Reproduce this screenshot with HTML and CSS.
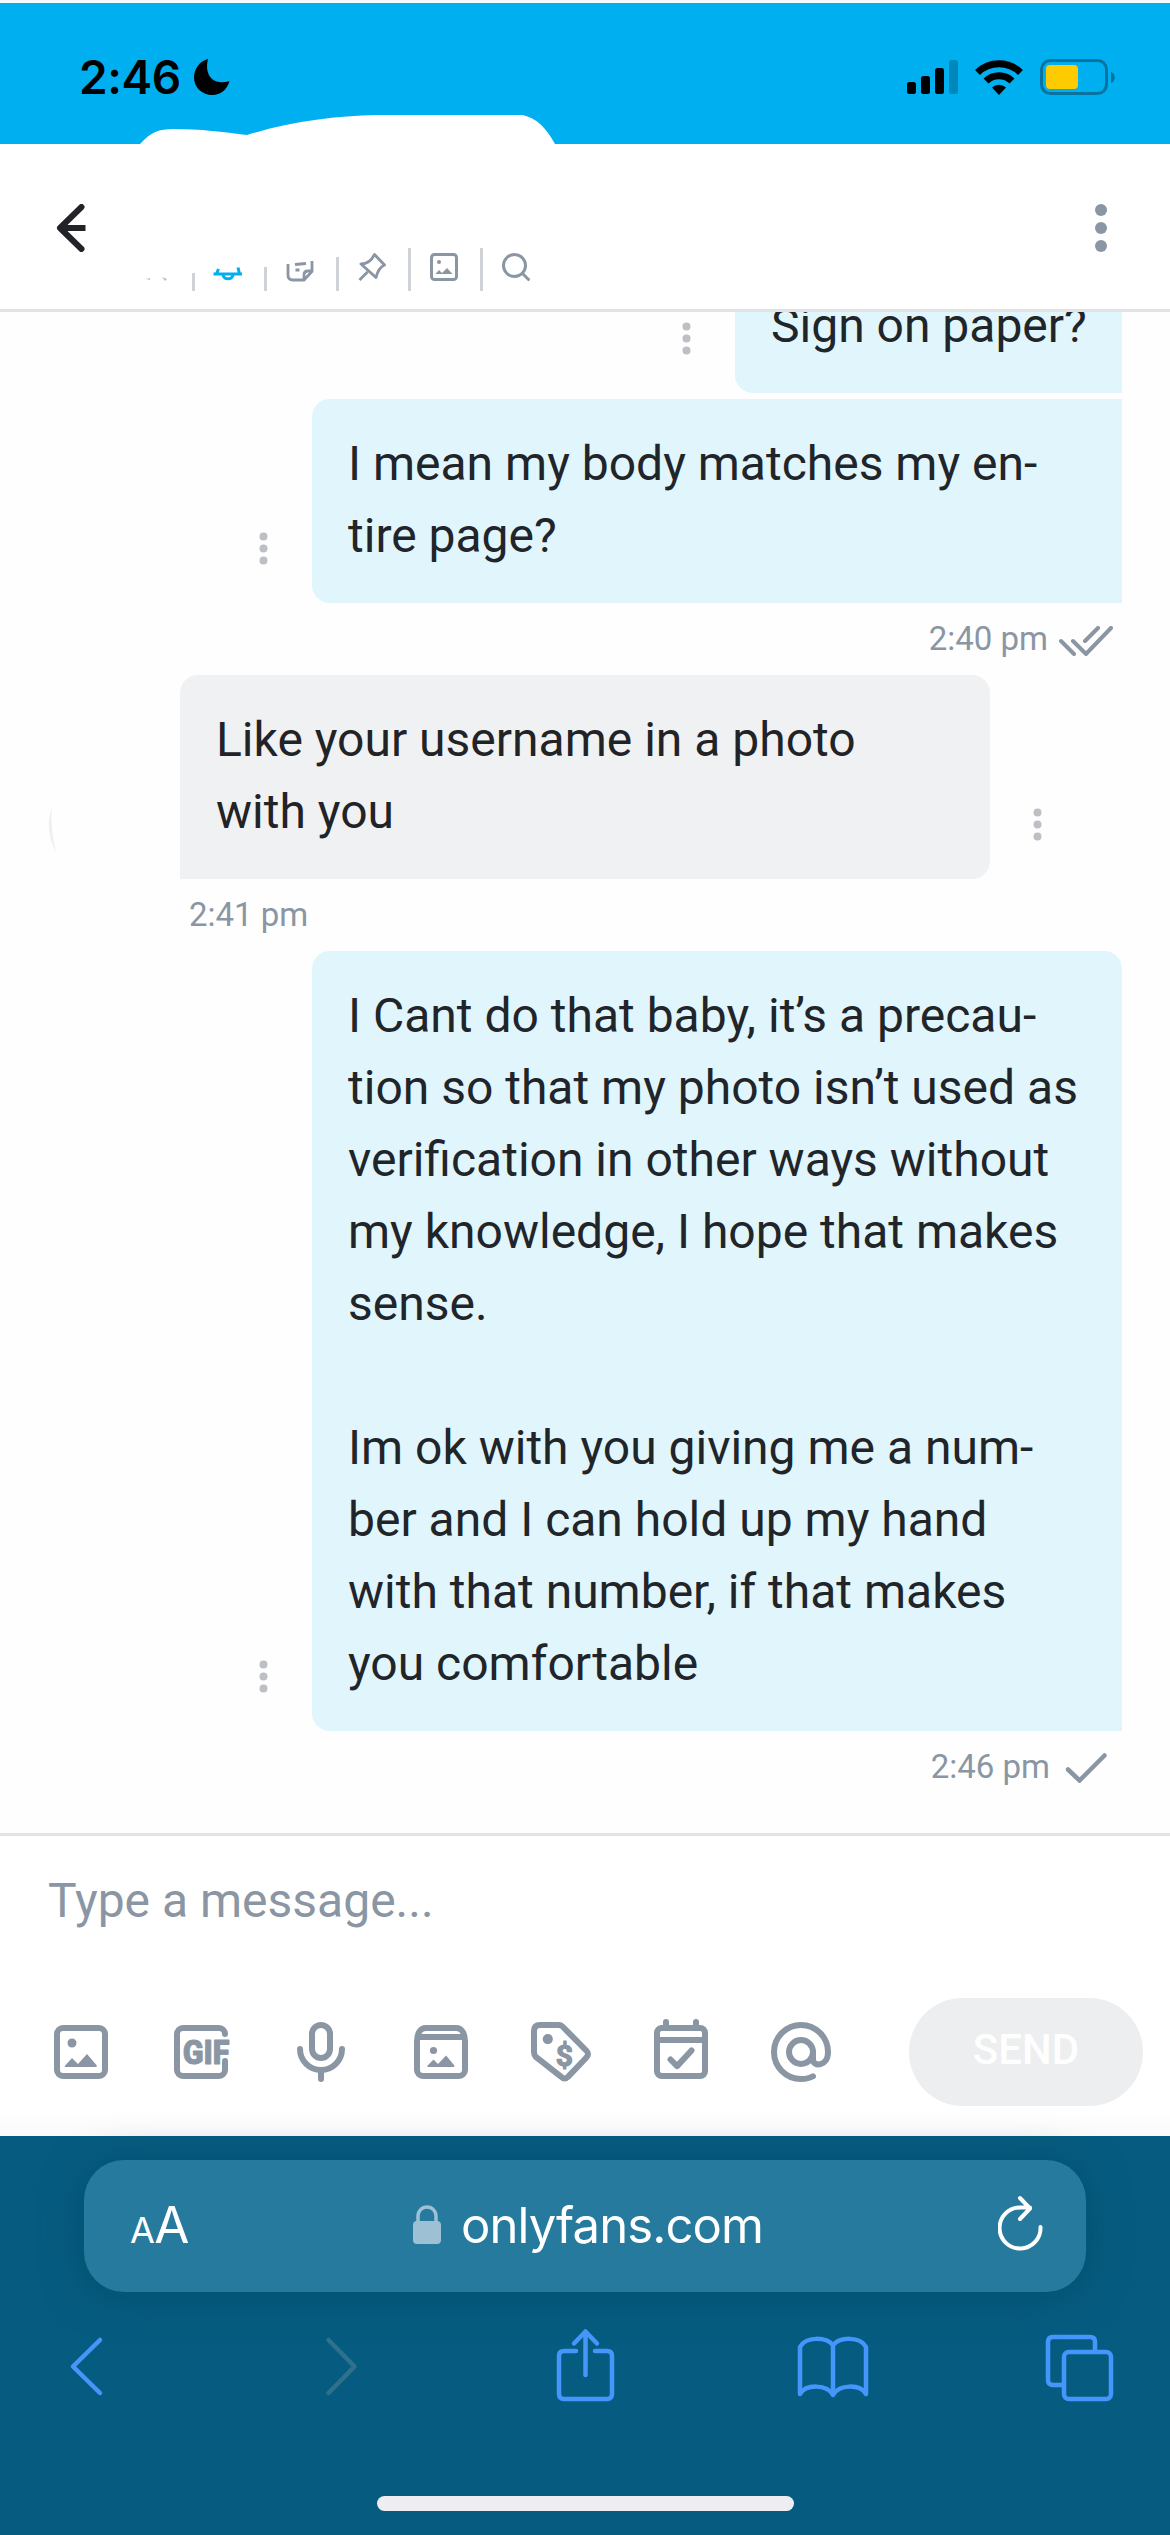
FILE: index.html
```html
<!DOCTYPE html>
<html lang="en">
<head>
<meta charset="utf-8">
<title>Messages</title>
<link rel="stylesheet" href="styles.css">
</head>
<body>
<div class="screen">
  <div class="status">
    <span class="clock">2:46</span>
    <svg class="moon" width="36" height="36" viewBox="0 0 36 36"><path d="M14 0C12 8 13 15 18 20c5 4 11 4 17.500 2C33 31 26 36 18.500 36 8 36 0 28.500 0 18.500 0 9.500 6 2 14 0z" fill="#000"/></svg>
    <div class="indicators">
      <svg width="52" height="36" viewBox="0 0 52 36"><rect x="0" y="23" width="9" height="12" rx="2.500"/><rect x="14" y="17" width="9" height="18" rx="2.500"/><rect x="28" y="9" width="9" height="26" rx="2.500"/><rect x="42" y="1" width="9" height="34" rx="2.500" opacity=".22"/></svg>
      <svg class="wifi" width="48" height="36" viewBox="0 0 48 36"><path d="M2.500 13.500a31 31 0 0 1 43 0M11 22a18.500 18.500 0 0 1 26 0" fill="none" stroke="#000" stroke-width="7"/><path d="M24 36l-7-7.500a10 10 0 0 1 14 0z"/></svg>
      <svg class="battery" width="76" height="36" viewBox="0 0 76 36"><rect x="1.500" y="1.500" width="65" height="33" rx="9" fill="none" stroke="#0873a0" stroke-width="3"/><rect x="6" y="6" width="32" height="24" rx="4" fill="#fecb00"/><path d="M71 13c5 1.500 5 9.500 0 11z" fill="#0873a0"/></svg>
    </div>
    <svg class="cover" width="415" height="29" viewBox="0 0 415 29"><path d="M0 29C11 17 19 14 33 14c28 0 50 3 74 6 45-14 88-19 130-20 45-1 90-1 138-1 18 1 29 10 40 30z" fill="#fff"/></svg>
  </div>

  <header class="header">
    <svg class="back" width="30" height="48" viewBox="0 0 30 48"><path d="M4 24h25.500" fill="none" stroke="#212328" stroke-width="6"/><path d="M25.500 3L4 24l21.500 21" fill="none" stroke="#212328" stroke-width="6" stroke-linecap="round" stroke-linejoin="round"/></svg>
    <div class="tools">
      <span class="tool"><svg width="30" height="30" viewBox="0 0 30 30"><path d="M5 27l4-1v2zM21 25l5 2-2 2z" fill="#8a96a3" opacity=".6"/></svg></span>
      <span class="tool"><i class="sep sep-1"></i><svg width="30" height="30" viewBox="0 0 30 30"><path d="M5.500 17L3.500 22h23L25 15.500M10 23c1 5 9 5 10 0M0.500 22H29" fill="none" stroke="#00aff0" stroke-width="3"/></svg></span>
      <span class="tool"><i class="sep sep-2"></i><svg width="30" height="30" viewBox="0 0 30 30"><path d="M3 12v11q0 5 5 5h11l8-8.500V9M19 28v-5q0-4 4-4h4M10 12.500l11-1M10.500 18h4" fill="none" stroke="#8a96a3" stroke-width="2.800"/></svg></span>
      <span class="tool"><i class="sep sep-3"></i><svg width="30" height="30" viewBox="0 0 30 30"><path d="M17.500 2.500L27.500 13q-6 2.500-8.500 12.500L4 12q9 0 13.500-9.500zM10.500 20L2.500 28" fill="none" stroke="#8a96a3" stroke-width="2.900" stroke-linejoin="round"/></svg></span>
      <span class="tool"><i class="sep"></i><svg width="30" height="30" viewBox="0 0 30 30"><rect x="2.500" y="2.500" width="25" height="25" rx="3" fill="none" stroke="#8a96a3" stroke-width="3"/><circle cx="10" cy="10" r="2" fill="#8a96a3"/><path d="M6.500 22l3.500-4 3 3 5-5 5.500 6z" fill="#8a96a3"/></svg></span>
      <span class="tool"><i class="sep"></i><svg width="30" height="30" viewBox="0 0 30 30"><circle cx="13.500" cy="13.500" r="11" fill="none" stroke="#8a96a3" stroke-width="3"/><path d="M21.500 21.500l6 6" stroke="#8a96a3" stroke-width="3" stroke-linecap="round"/></svg></span>
    </div>
    <svg class="menu" width="12" height="48" viewBox="0 0 12 48" fill="#8a96a3"><circle cx="6" cy="6" r="6"/><circle cx="6" cy="24" r="6"/><circle cx="6" cy="42" r="6"/></svg>
  </header>

  <main class="chat">
    <div class="row row-cut">
      <svg class="dots" width="9" height="33" viewBox="0 0 9 33"><circle cx="4.500" cy="4.500" r="4"/><circle cx="4.500" cy="16.500" r="4"/><circle cx="4.500" cy="28.500" r="4"/></svg>
      <p class="bubble mine short">Sign on paper?</p>
    </div>
    <div class="row">
      <svg class="dots" width="9" height="33" viewBox="0 0 9 33"><circle cx="4.500" cy="4.500" r="4"/><circle cx="4.500" cy="16.500" r="4"/><circle cx="4.500" cy="28.500" r="4"/></svg>
      <p class="bubble mine">I mean my body matches my en-<br>tire page?</p>
    </div>
    <div class="stamp">2:40 pm <svg class="double" width="54" height="30" viewBox="0 0 54 30"><path d="M2 15l13 13M14 15l13 13L52 2M26 15L39 2" fill="none" stroke="#8a96a3" stroke-width="4" stroke-linecap="round"/></svg></div>
    <div class="row theirs-row">
      <svg class="arc" width="8" height="46" viewBox="0 0 8 46"><path d="M4 0Q-4 22 8 45Q2 22 4 0z" fill="#efeff0"/></svg>
      <p class="bubble theirs">Like your username in a photo<br>with you</p>
      <svg class="dots" width="9" height="33" viewBox="0 0 9 33"><circle cx="4.500" cy="4.500" r="4"/><circle cx="4.500" cy="16.500" r="4"/><circle cx="4.500" cy="28.500" r="4"/></svg>
    </div>
    <div class="stamp stamp-left">2:41 pm</div>
    <div class="row">
      <svg class="dots" width="9" height="33" viewBox="0 0 9 33"><circle cx="4.500" cy="4.500" r="4"/><circle cx="4.500" cy="16.500" r="4"/><circle cx="4.500" cy="28.500" r="4"/></svg>
      <p class="bubble mine first">I Cant do that baby, it’s a precau-<br>tion so that my photo isn’t used as<br>verification in other ways without<br>my knowledge, I hope that makes<br>sense.<br><br>Im ok with you giving me a num-<br>ber and I can hold up my hand<br>with that number, if that makes<br>you comfortable</p>
    </div>
    <div class="stamp">2:46 pm <svg class="single" width="42" height="30" viewBox="0 0 42 30"><path d="M3 16.500L14.500 27.500 39.500 2.500" fill="none" stroke="#8a96a3" stroke-width="4.500" stroke-linecap="round"/></svg></div>
  </main>

  <section class="composer">
    <div class="placeholder">Type a message...</div>
    <div class="actions">
      <svg class="act" viewBox="0 0 24 24"><rect x="4" y="4" width="16" height="16" rx="2"/><circle class="f" cx="9" cy="9" r="1.500"/><path class="f" d="M6.800 17q-.500 0 0-.600L9 14l2 2 3-3.300 3.200 3.700q.300.600-.200.600z"/></svg>
      <svg class="act" viewBox="0 0 24 24"><path d="M20 6V6a2 2 0 0 0-2-2H6a2 2 0 0 0-2 2v12a2 2 0 0 0 2 2h12a2 2 0 0 0 2-2v-3"/><text class="gif" x="5.900" y="16" textLength="15.600" lengthAdjust="spacingAndGlyphs">GIF</text></svg>
      <svg class="act" viewBox="0 0 24 24"><rect x="9" y="3" width="6" height="11" rx="3"/><path d="M5 11a7 7 0 0 0 14 0M12 18v3"/></svg>
      <svg class="act" viewBox="0 0 24 24"><path d="M4 8.500C4 6 5 4 7 4h10c2 0 3 2 3 4.500V18a2 2 0 0 1-2 2H6a2 2 0 0 1-2-2zM4.500 7h15"/><circle class="f" cx="9.500" cy="11.500" r="1.200"/><path class="f" d="M7.800 17q-.600 0-.200-.600L9.500 14.500l1.500 1.500 2.700-2.800 2.700 3.200q.300.600-.200.600z"/></svg>
      <svg class="act" viewBox="0 0 24 24"><path d="M5 3h6.200q.8 0 1.300.5l7.900 8q1.200 1.200 0 2.400l-6 6.300q-1.200 1.200-2.400 0L3.600 13.600Q3 13 3 12V5q0-2 2-2z"/><circle class="f" cx="7.600" cy="7.700" r="1.700"/><text class="dollar" x="13.100" y="16.500">$</text></svg>
      <svg class="act" viewBox="0 0 24 24"><rect x="4" y="4" width="16" height="16" rx="1.600"/><path d="M4 8h16M7 2v2M17 2v2M8.500 14.500l2.200 2.200 4.800-5.200"/></svg>
      <svg class="act" viewBox="0 0 24 24"><circle cx="12" cy="12" r="4"/><path d="M16 12v2.500c0 2.500 5 2.500 5-2.500a9 9 0 1 0-9 9q2.500 0 4-.9"/></svg>
      <span class="send">SEND</span>
    </div>
  </section>

  <footer class="browser">
    <div class="address">
      <span class="aa"><span class="small">A</span>A</span>
      <span class="site">
        <svg class="lock" width="28" height="39" viewBox="0 0 28 39"><rect x="0" y="16" width="28" height="23" rx="4" fill="#9dc0d4"/><path d="M5 17v-6a9 9 0 0 1 18 0v6" fill="none" stroke="#9dc0d4" stroke-width="3.500"/></svg>
        onlyfans.com
      </span>
      <svg class="reload" width="46" height="56" viewBox="0 0 46 56"><path d="M42.500 32A20.500 20.500 0 1 1 22 12.500H32M22 3l10 10.500L22 24" fill="none" stroke="#fff" stroke-width="4" stroke-linecap="round" stroke-linejoin="round"/></svg>
    </div>
    <nav class="nav">
      <svg width="72" height="76" viewBox="0 0 72 76"><path d="M31 12L4 38.500 31 65"/></svg>
      <svg class="fwd" width="72" height="76" viewBox="7 0 72 76"><path d="M22.500 12L48.500 38.500 22.500 65"/></svg>
      <svg width="72" height="76" viewBox="7 0 72 76"><path d="M27 23H15q-5 0-5 5v38q0 5 5 5h43q5 0 5-5V28q0-5-5-5H46M36.500 47V4M25 15.500L36.500 3.500 48 15.500"/></svg>
      <svg width="72" height="76" viewBox="3 0 72 76"><path d="M36 17C29 9 9 8 3 19v47c6-10 27-10 33 1 6-11 27-11 33-1V19C63 8 43 9 36 17v49"/></svg>
      <svg width="72" height="76" viewBox="0 0 72 76"><rect x="21" y="24" width="47" height="47" rx="5"/><path d="M20 57h-10q-5 0-5-5V14q0-5 5-5h37q5 0 5 5v9"/></svg>
    </nav>
    <div class="home"></div>
  </footer>
</div>
</body>
</html>
```
FILE: styles.css
```css
* { box-sizing: border-box; }
body { margin: 0; background: #fff; font-family: Roboto, "Liberation Sans", sans-serif; }
svg { display: block; flex: none; }
p { margin: 0; }

.screen { width: 1170px; height: 2535px; display: flex; flex-direction: column; overflow: hidden; background: #fefefe; }

.status { position: relative; height: 144px; padding: 7px 54px 0 79px; border-top: 3px solid #f4fbfd; background: #00aff0; display: flex; align-items: center; }
.clock { width: 115px; font: 600 46px/56px Inter, sans-serif; letter-spacing: -.4px; color: #000; white-space: nowrap; }
.indicators { margin-left: auto; display: flex; align-items: center; }
.wifi { margin-left: 16px; }
.battery { margin-left: 17px; }
.cover { position: absolute; left: 140px; bottom: 0; }

.header { height: 168px; padding: 0 63px 0 56px; border-bottom: 3px solid #e2e3e5; background: #fff; display: flex; align-items: center; }
.back { margin-top: 3px; }
.tools { align-self: flex-end; margin: 0 auto 18px 34px; height: 45px; display: flex; }
.tool { width: 72px; display: flex; align-items: flex-end; justify-content: center; }
.tool svg { margin: 0 auto 9px; }
.sep { width: 3px; height: 43px; margin-right: -3px; background: #cfd3d7; }
.sep-1 { height: 18px; }
.sep-2 { height: 24px; }
.sep-3 { height: 34px; }
.menu { margin-top: 3px; }

.chat { height: 1521px; padding: 0 48px; overflow: hidden; }
.row { display: flex; align-items: flex-end; justify-content: flex-end; }
.row-cut { height: 81px; margin-bottom: 6px; }
.dots { margin: 0 44px 38px 0; fill: #bcbfc3; }
.bubble { width: 810px; padding: 29px 0 31px 36px; border-radius: 18px 0 0 18px; font-size: 48px; line-height: 72px; white-space: nowrap; color: #212529; }
.mine { background: #e0f5fc; }
.short { width: 387px; }
.first { border-top-right-radius: 18px; }
.theirs-row { justify-content: flex-start; }
.theirs { margin-left: 124px; border-radius: 18px 18px 18px 0; background: #f0f1f3; color: #222326; }
.theirs-row .dots { margin: 0 0 38px 43px; }
.arc { margin-bottom: 26px; }
.stamp { height: 72px; padding: 0 9px 0 0; display: flex; align-items: center; justify-content: flex-end; font-size: 33px; line-height: 40px; color: #8a96a3; }
.stamp-left { padding-left: 141px; justify-content: flex-start; }
.double { margin: 4px 0 0 11px; }
.single { margin: 2px 6px 0 15px; }

.composer { height: 303px; border-top: 3px solid #e2e3e5; background: linear-gradient(#fff 275px, #fafafa); }
.placeholder { height: 132px; padding-left: 48px; font-size: 48px; line-height: 130px; color: #8a96a3; }
.actions { height: 168px; padding: 0 27px 0 45px; display: flex; align-items: center; gap: 48px; }
.act { width: 72px; height: 72px; fill: none; stroke: #8a96a3; stroke-width: 2; stroke-linecap: round; stroke-linejoin: round; }
.act .f { fill: #8a96a3; stroke: none; }
.gif { fill: #8a96a3; stroke: #8a96a3; stroke-width: .3px; font: 900 11px Roboto, sans-serif; }
.dollar { fill: #8a96a3; stroke: #8a96a3; stroke-width: .4px; font: 700 10px Roboto, sans-serif; text-anchor: middle; }
.send { width: 234px; height: 108px; margin-left: auto; border-radius: 54px; background: #edeeef; color: #fefefe; font-size: 42px; font-weight: 500; line-height: 104px; text-align: center; }

.browser { height: 399px; padding-top: 24px; background: #065c80; }
.address { width: 1002px; height: 132px; margin: 0 auto; padding: 0 42px 0 46px; border-radius: 40px; background: #257a9d; box-shadow: 0 4px 40px rgba(0, 70, 95, .6); display: flex; align-items: center; color: #fff; font-family: Inter, sans-serif; }
.aa { width: 60px; font-size: 51px; line-height: 60px; margin-top: 3px; white-space: nowrap; letter-spacing: -.5px; }
.small { font-size: 36px; }
.site { margin-left: 223px; display: flex; align-items: center; gap: 20px; font-size: 49px; line-height: 60px; letter-spacing: -.9px; }
.lock { margin-top: -3px; }
.reload { margin: -6px 0 0 auto; }
.nav { height: 76px; margin-top: 36px; padding: 0 55px 0 69px; display: flex; align-items: center; justify-content: space-between; }
.nav svg { overflow: visible; fill: none; stroke: #4596fb; stroke-width: 4.500px; stroke-linecap: round; stroke-linejoin: round; }
.nav .fwd { stroke: #31708c; }
.home { width: 417px; height: 15px; margin: 92px auto 0; border-radius: 8px; background: #eeedf1; }
```
